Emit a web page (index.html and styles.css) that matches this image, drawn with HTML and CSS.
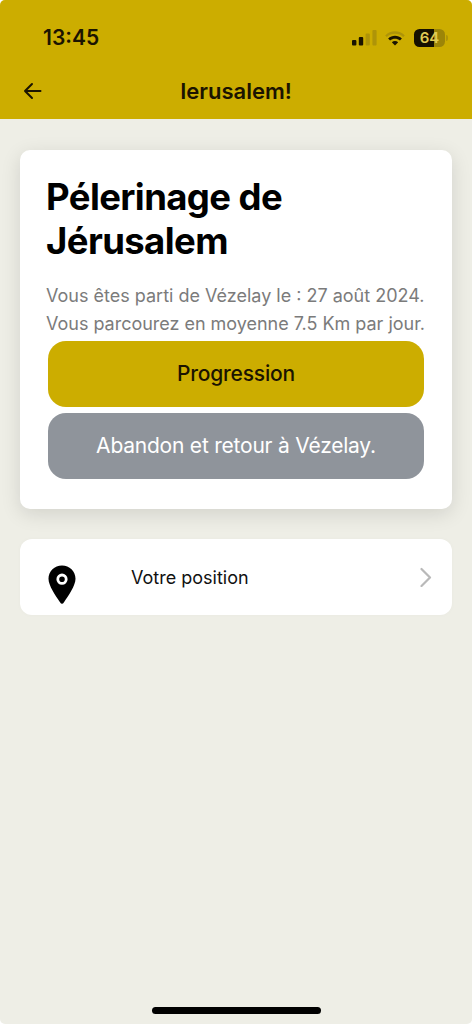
FILE: index.html
```html
<!DOCTYPE html>
<html lang="fr">
<head>
<meta charset="utf-8">
<title>Ierusalem!</title>
<link rel="stylesheet" href="styles.css">
</head>
<body>
<div class="screen">
  <header class="header">
    <div class="status">
      <span class="clock">13:45</span>
      <div class="indicators">
        <svg class="signal" width="25" height="16" viewBox="0 0 25 16">
          <rect x="0" y="10" width="4.4" height="5.500" rx="1"/>
          <rect x="6.8" y="7" width="4.4" height="8.500" rx="1"/>
          <rect class="dim" x="13.6" y="3.5" width="4.2" height="12" rx="1"/>
          <rect class="dim" x="20.4" y="0" width="4.2" height="15.500" rx="1"/>
        </svg>
        <svg class="wifi" width="20" height="15" viewBox="0 0 20 15">
          <path class="dim" d="M0.2 4.4C5.5-1.2 14.5-1.2 19.8 4.4L18.2 6C13.500 1.700 6.500 1.700 1.800 6Z"/>
          <path d="M3.1 7.6C7 3.8 13 3.8 16.900 7.600L14.900 9.600C12.100 7.100 7.900 7.100 5.100 9.600Z"/>
          <path d="M6.800 11.300C8.700 9.700 11.300 9.700 13.200 11.300L10 14.600Z"/>
        </svg>
        <div class="battery">
          <span class="level">64</span>
          <span class="cap"></span>
        </div>
      </div>
    </div>
    <div class="nav">
      <svg class="back" width="19" height="18" viewBox="0 0 19 18"><path d="M17.500 9H2M9 2L2 9L9 16"/></svg>
      <h1 class="nav-title">Ierusalem!</h1>
    </div>
  </header>
  <main class="content">
    <section class="card">
      <h2 class="card-title">Pélerinage de<br><span class="city">Jérusalem</span></h2>
      <p class="info"><span class="started">Vous êtes parti de Vézelay le : 27 août 2024.</span><br><span class="pace">Vous parcourez en moyenne 7.5 Km par jour.</span></p>
      <div class="actions">
        <button class="btn primary">Progression</button>
        <button class="btn secondary">Abandon et retour à Vézelay.</button>
      </div>
    </section>
    <a class="row">
      <svg class="pin" width="28" height="40" viewBox="0 0 28 40">
        <path d="M14 .5C6.500 .5 .5 6.300 .5 13.700C.5 20.500 7.500 30.500 12 37.200Q14 40.500 16 37.200C20.500 30.500 27.500 20.500 27.500 13.700C27.500 6.300 21.500 .5 14 .5Z"/>
        <circle cx="14" cy="14.200" r="4.200"/>
      </svg>
      <span class="row-label">Votre position</span>
      <svg class="chevron" width="12" height="20" viewBox="0 0 12 20"><path d="M1.500 2L10 10.500L1.500 19"/></svg>
    </a>
  </main>
  <div class="home"></div>
</div>
</body>
</html>
```
FILE: styles.css
```css
* { box-sizing: border-box; }
html { background: #fff; }
body { margin: 0; font-family: Inter, "Liberation Sans", sans-serif; color: #000; }
.screen {
  display: flex; flex-direction: column;
  width: 472px; height: 1024px;
  background: #eeeee6;
  border-radius: 5px; overflow: hidden;
}
.header { height: 119px; background: #ccad00; color: #1b1400; }
.status {
  display: flex; align-items: center; justify-content: space-between;
  height: 64px; padding: 12px 24px 0 43px;
}
.clock { font-size: 21px; font-weight: 600; line-height: 24px; }
.indicators { display: flex; align-items: center; gap: 9px; fill: #1b1400; }
.signal { margin-right: -1px; }
.dim { fill: #ae9408; }
.battery { display: flex; align-items: center; gap: 1px; }
.level {
  width: 31px; height: 18px; border-radius: 5.5px;
  background: linear-gradient(90deg, #151000 66%, #9c8508 66%);
  color: #e0cb55; font-size: 15px; font-weight: 600; line-height: 18px; text-align: center;
}
.cap { width: 2px; height: 6px; border-radius: 0 2px 2px 0; background: #ae9408; }
.nav {
  display: grid; grid-template-columns: 19px 1fr 19px; align-items: center;
  height: 54px; padding: 0 23px;
}
.back, .chevron { fill: none; stroke: #1b1400; stroke-width: 2; stroke-linecap: round; stroke-linejoin: round; }
.nav-title { margin: 0; font-size: 22px; font-weight: 600; line-height: 28px; text-align: center; }
.content { flex: 1; padding: 31px 20px 0; }
.card {
  height: 359px; padding: 25px 26px 0;
  background: #fff; border-radius: 10px;
  box-shadow: 0 5px 20px rgba(0, 0, 0, .12);
}
.card-title { margin: 0; font-size: 36.500px; font-weight: 700; line-height: 44px; letter-spacing: -.6px; white-space: nowrap; }
.info { margin: 19px 0 0; font-size: 18px; line-height: 28px; color: #7b7b7b; white-space: nowrap; }
.pace { letter-spacing: -.02px; }
.actions { display: grid; gap: 6px; padding: 3px 2px 0 2px; }
.btn { height: 66px; padding: 0; border: 0; border-radius: 18px; font: 400 21px/26px Inter, sans-serif; white-space: nowrap; }
.primary { background: #ccad00; color: #1b1400; font-weight: 500; letter-spacing: -.2px; }
.secondary { background: #8f949b; color: #fff; letter-spacing: -.22px; }
.row {
  display: flex; align-items: center;
  height: 76px; margin-top: 30px; padding: 0 20px 0 28px;
  background: #fff; border-radius: 12px;
  box-shadow: 0 0 5px rgba(0, 0, 0, .025);
}
.pin { margin-top: 15px; }
.pin circle { fill: #000; stroke: #fff; stroke-width: 2.800; }
.row-label { flex: 1; margin: 2px 0 0 55px; font-size: 18px; line-height: 24px; color: #111; }
.chevron { stroke: #b9b9b9; stroke-width: 2.200; }
.home { width: 169px; height: 7px; margin: 0 auto 10px; border-radius: 4px; background: #000; }
```
